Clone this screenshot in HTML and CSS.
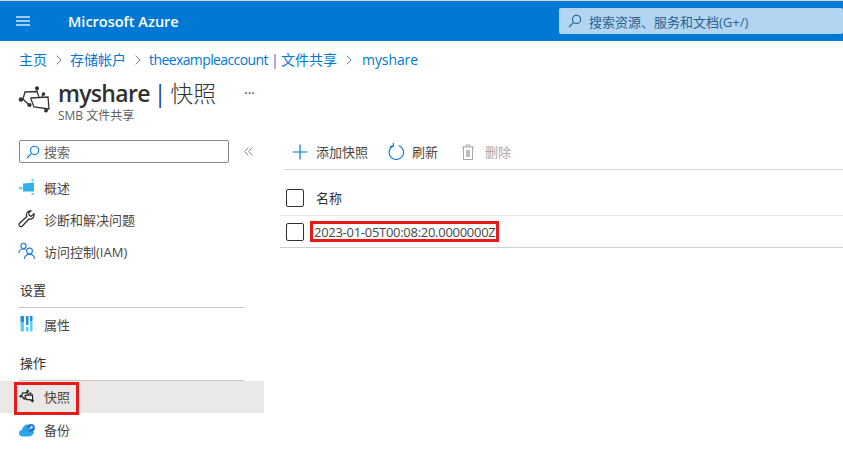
FILE: index.html
```html
<!DOCTYPE html>
<html lang="zh-CN">
<head>
<meta charset="utf-8">
<title>myshare | 快照</title>
<link rel="stylesheet" href="styles.css">
</head>
<body>
<header class="topbar">
  <svg class="hamburger" width="14" height="10" viewBox="0 0 14 10"><path d="M0 0h14v2H0zM0 4h14v2H0zM0 8h14v2H0z" fill="#9fcdf0"/></svg>
  <span class="brand">Microsoft Azure</span>
  <div class="globalsearch">
    <svg width="14" height="14" viewBox="0 0 14 14" fill="none" stroke="#1f5f96" stroke-width="1.1"><circle cx="8.6" cy="5.4" r="4.1"/><path d="M5.6 8.3L1 13"/></svg>
    <span>搜索资源、服务和文档(G+/)</span>
  </div>
</header>

<nav class="crumbs">
  <a>主页</a><svg class="chev" width="6" height="10" viewBox="0 0 6 10"><path d="M.7.7L5.2 5 .7 9.3" fill="none" stroke="#7a7a7a"/></svg>
  <a>存储帐户</a><svg class="chev" width="6" height="10" viewBox="0 0 6 10"><path d="M.7.7L5.2 5 .7 9.3" fill="none" stroke="#7a7a7a"/></svg>
  <a><span class="latin">theexampleaccount | </span>文件共享</a><svg class="chev" width="6" height="10" viewBox="0 0 6 10"><path d="M.7.7L5.2 5 .7 9.3" fill="none" stroke="#7a7a7a"/></svg>
  <a class="current">myshare</a>
</nav>

<section class="titlebar">
  <svg class="titleicon" width="40" height="40" viewBox="0 0 40 40" fill="none" stroke="#333" stroke-width="1.3">
    <path d="M9 20L11 13L23 12.500L25 18M9 20L15 26"/>
    <path d="M16.500 19L34 18L35 30L20 28L16.500 19"/>
    <path d="M23 9.500V12.500M29 15L28 18M33 30.500L31.500 29.500"/>
    <g fill="#333" stroke="none"><circle cx="7" cy="20.500" r="2.300"/><circle cx="23" cy="9.300" r="2"/><circle cx="29.500" cy="15" r="1.800"/><circle cx="15.500" cy="26" r="2.100"/><circle cx="32" cy="31.500" r="2"/></g>
  </svg>
  <div class="titletext">
    <h1><span class="name">myshare</span> <span class="bar">|</span> <span class="page">快照</span></h1>
    <div class="subtitle">SMB 文件共享</div>
  </div>
  <span class="more">···</span>
</section>

<div class="main">
  <aside class="side">
    <div class="searchrow">
      <div class="search">
        <svg width="14" height="14" viewBox="0 0 14 14" fill="none" stroke="#0078d4" stroke-width="1.1"><circle cx="8.6" cy="5.4" r="4.1"/><path d="M5.6 8.3L1 13"/></svg>
        <span>搜索</span>
      </div>
      <svg class="collapse" width="9" height="9" viewBox="0 0 9 9" fill="none" stroke="#888"><path d="M4.3.6L.7 4.5l3.6 3.9M8.3.6L4.7 4.5l3.6 3.9"/></svg>
    </div>

    <a class="item">
      <svg width="18" height="16" viewBox="0 0 18 16"><path d="M5 4.500L16 3.500V12.500H5z" fill="#32b0e7"/><g fill="#58d3f5"><rect x="1" y="8" width="3.500" height="2.400"/><rect x="13.500" y="0" width="2.200" height="2.400"/><rect x="13.500" y="14" width="2.200" height="2"/></g></svg>
      <span>概述</span>
    </a>
    <a class="item">
      <svg width="18" height="18" viewBox="0 0 18 18" fill="none" stroke="#2b2b2b" stroke-width="1.2"><path d="M16 3.800l-3 2.600-2-1.400-.3-2.600L13 1c-2.400-.6-4.800 1.400-4.500 4.200.1.700.2 1 .3 1.300L1.600 13.300c-.8.800-.8 2 .1 2.800.8.800 2 .7 2.700-.1L11 9c2.800.9 5.800-1.700 5-5.200z"/></svg>
      <span>诊断和解决问题</span>
    </a>
    <a class="item">
      <svg width="18" height="18" viewBox="0 0 18 18" fill="none" stroke="#2f7fd6" stroke-width="1.2"><circle cx="5.500" cy="4" r="2.600"/><path d="M.8 11c.4-2.500 2.300-4 4.700-4 1 0 1.500.2 2.200.6"/><circle cx="11.500" cy="9" r="2.900"/><path d="M6.400 17c.3-2.800 2.400-4.600 5.100-4.600s4.800 1.800 5.100 4.600"/></svg>
      <span>访问控制(IAM)</span>
    </a>

    <h2 class="group">设置</h2>
    <a class="item">
      <svg width="18" height="16" viewBox="0 0 18 16"><g fill="#1f8fe0"><rect x="2.500" y="0" width="3.500" height="6"/><rect x="8" y="0" width="2.500" height="9"/><rect x="12" y="0" width="2.500" height="5"/></g><g fill="#5ad2f4"><rect x="2.500" y="6" width="3.500" height="9.500"/><rect x="8" y="11" width="2.500" height="4.500"/><rect x="12" y="5" width="2.500" height="10.500"/></g></svg>
      <span>属性</span>
    </a>

    <h2 class="group">操作</h2>
    <a class="item active">
      <svg width="18" height="18" viewBox="0 0 45 45" fill="none" stroke="#222" stroke-width="3"><path d="M9 23L11 15L24 14L26 20M9 23L15 29"/><path d="M17 21L36 20L37 33L21 31L17 21"/><g fill="#222" stroke="none"><circle cx="7" cy="23" r="3.200"/><circle cx="24" cy="10" r="3"/><circle cx="31" cy="16" r="2.800"/><circle cx="16" cy="29" r="3"/><circle cx="36" cy="35" r="3"/></g></svg>
      <span>快照</span>
      <i class="mark markside"></i>
    </a>
    <a class="item">
      <svg width="18" height="16" viewBox="0 0 18 16"><path d="M4.500 15.500C2.300 15.500 1 14 1 12.300c0-1.800 1.200-3 2.900-3.200C4.600 6 6.700 3.500 10 3.500l6 8c-1 2.500-3 4-5.500 4z" fill="#2aa6e8"/><circle cx="13" cy="6.800" r="3.900" fill="#1f78d4"/><path d="M11 8.500c.2-1.800 1.200-2.200 3-2M13.200 4.700l1.300 1.700-1.700 1.300" fill="none" stroke="#fff" stroke-width="1"/></svg>
      <span>备份</span>
    </a>
  </aside>

  <main class="content">
    <div class="toolbar">
      <button class="tool add">
        <svg width="16" height="16" viewBox="0 0 16 16"><path d="M8 .5v15M.5 8h15" stroke="#0078d4" stroke-width="1.200" fill="none"/></svg>
        <span>添加快照</span>
      </button>
      <button class="tool">
        <svg width="16" height="17" viewBox="0 0 16 17" fill="none" stroke="#0078d4" stroke-width="1.100"><path d="M5 2.900A7.200 7.200 0 1 0 11 2.600"/><path d="M5.300 0v3.400H1.900"/></svg>
        <span>刷新</span>
      </button>
      <button class="tool disabled">
        <svg width="14" height="16" viewBox="0 0 14 16" fill="none" stroke="#a6a6a6"><path d="M1 3h12M5 3V1h4v2M2.500 3v12.500h9V3"/><path d="M5 6h4v7H5z" fill="#bdbdbd" stroke="none"/></svg>
        <span>删除</span>
      </button>
    </div>
    <div class="row head">
      <span class="check"></span>
      <span class="colname">名称</span>
    </div>
    <div class="row body">
      <span class="check"></span>
      <span class="stamp">2023-01-05T00:08:20.0000000Z<i class="mark markrow"></i></span>
    </div>
  </main>
</div>
</body>
</html>
```
FILE: styles.css
```css
* { box-sizing: border-box; }
html, body { margin: 0; height: 100%; }
body {
  width: 843px;
  height: 461px;
  overflow: hidden;
  background: #fff;
  color: #323130;
  font-family: "Open Sans", "Noto Sans CJK SC", sans-serif;
  font-size: 13px;
}
.topbar {
  height: 41px;
  background: #0078d4;
  border-top: 1px solid #d8d8d8;
  display: flex;
  align-items: center;
  padding-left: 16px;
}
.hamburger { display: block; }
.brand {
  margin-left: 38px;
  width: 491px;
  color: #fff;
  font-size: 14.5px;
  font-weight: 600;
  white-space: nowrap;
}
.globalsearch {
  width: 284px;
  height: 26px;
  background: #b2d6f2;
  border-radius: 2px;
  display: flex;
  align-items: center;
  gap: 7px;
  padding-left: 9px;
  color: #2c5f8e;
  font-size: 13px;
  white-space: nowrap;
}
.crumbs {
  height: 36px;
  display: flex;
  align-items: center;
  gap: 8px;
  padding-left: 19px;
  color: #0078d4;
  font-size: 14px;
  white-space: nowrap;
}
.latin { letter-spacing: -0.6px; }
.current { margin-left: 2px; letter-spacing: -0.1px; }
.chev { margin: 2px 0.5px 0; }
.titlebar {
  display: flex;
  align-items: flex-start;
  height: 49px;
  padding: 1px 0 0 14px;
}
.titleicon { margin: 1px 4px 0 0; }
.titletext { width: 186px; }
h1 {
  margin: 0;
  font-size: 23px;
  line-height: 31px;
  font-weight: 400;
  white-space: nowrap;
  word-spacing: -2px;
}
.name { font-weight: 600; letter-spacing: -0.7px; }
.bar { color: #1c3f94; }
.page { font-weight: 300; }
.subtitle {
  font-size: 12px;
  line-height: 14px;
  color: #605e5c;
}
.more { color: #555; font-size: 14px; line-height: 30px; }
.main { display: flex; }
.side { width: 264px; flex: none; padding-top: 14px; }
.searchrow {
  display: flex;
  align-items: center;
  padding-left: 19px;
  margin-bottom: 8px;
  height: 23px;
}
.search {
  width: 210px;
  height: 23px;
  border: 1px solid #8a8886;
  border-radius: 2px;
  display: flex;
  align-items: center;
  gap: 4px;
  padding-left: 6px;
  color: #605e5c;
}
.collapse { margin-left: 15px; }
.item {
  position: relative;
  display: flex;
  align-items: center;
  gap: 8px;
  height: 32px;
  padding-left: 18px;
  color: #484644;
}
.item svg { flex: none; }
.item.active { background: #ebe9e7; padding-bottom: 2px; }
.group {
  margin: 0 20px 0 19px;
  height: 41px;
  padding: 12px 0 0 1px;
  line-height: 22px;
  font-size: 13px;
  font-weight: 400;
  color: #323130;
  border-bottom: 1px solid #c8c6c4;
}
.mark {
  position: absolute;
  border: 3px solid #e81919;
  pointer-events: none;
}
.markside { left: 14px; top: 1px; width: 65px; height: 33px; }
.content { flex: 1; padding-left: 16px; }
.toolbar {
  height: 36px;
  margin: 8px 0 0 4px;
  display: flex;
  align-items: center;
  gap: 23px;
  border-bottom: 1px solid #d6d6d6;
  padding-left: 8px;
}
.tool {
  display: flex;
  align-items: center;
  gap: 8px;
  padding: 0;
  border: 0;
  background: none;
  color: #484644;
  font: inherit;
}
.tool.add { margin-right: -3px; }
.tool.disabled { color: #a6a6a6; gap: 10px; }
.row {
  display: flex;
  align-items: center;
  padding-left: 6px;
  gap: 12px;
  border-bottom: 1px solid #e6e6e6;
}
.row.head { height: 46px; padding-top: 10px; }
.row.body { height: 32px; border-bottom-color: #d0d0d0; gap: 10px; }
.check {
  width: 18px;
  height: 18px;
  border: 1px solid #323130;
  border-radius: 2px;
  flex: none;
}
.stamp {
  position: relative;
  white-space: nowrap;
  color: #484644;
  letter-spacing: -0.28px;
}
.markrow { left: -4px; top: -2px; right: -4px; bottom: -1px; }
```
